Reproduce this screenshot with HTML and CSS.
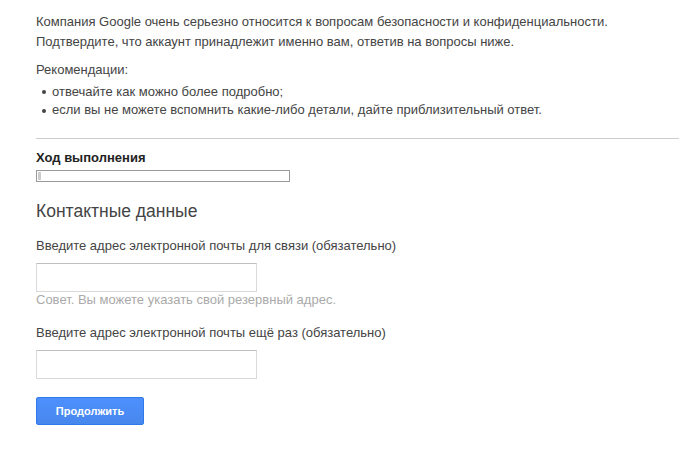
FILE: index.html
```html
<!DOCTYPE html>
<html lang="ru">
<head>
<meta charset="utf-8">
<link rel="stylesheet" href="styles.css">
</head>
<body>
<div class="page">
  <div class="intro">
    <p class="lead">Компания Google очень серьезно относится к вопросам безопасности и конфиденциальности.<br>Подтвердите, что аккаунт принадлежит именно вам, ответив на вопросы ниже.</p>
    <p class="rec-title">Рекомендации:</p>
    <ul class="rec-list">
      <li>отвечайте как можно более подробно;</li>
      <li>если вы не можете вспомнить какие-либо детали, дайте приблизительный ответ.</li>
    </ul>
  </div>
  <hr class="divider">
  <div class="form">
    <div class="progress-label">Ход выполнения</div>
    <div class="progress"><div class="progress-fill" style="width:1%"></div></div>
    <h2 class="section-title">Контактные данные</h2>
    <label class="field-label" for="email1">Введите адрес электронной почты для связи (обязательно)</label>
    <input class="text-input" id="email1" type="text">
    <div class="hint">Совет. Вы можете указать свой резервный адрес.</div>
    <label class="field-label second" for="email2">Введите адрес электронной почты ещё раз (обязательно)</label>
    <input class="text-input" id="email2" type="text">
    <div class="actions"><button class="btn-primary" type="button">Продолжить</button></div>
  </div>
</div>
</body>
</html>
```

FILE: styles.css
```css
html, body {
  margin: 0;
  padding: 0;
  background: #fff;
}
body {
  font-family: Arial, "Liberation Sans", sans-serif;
  font-size: 13px;
  color: #444;
}
.page {
  padding: 12px 0 0 36px;
}
.intro p {
  margin: 0;
}
.lead {
  line-height: 20px;
}
.rec-title {
  margin-top: 8px !important;
  line-height: 19px;
}
.rec-list {
  list-style: none;
  margin: 3px 0 0 0;
  padding: 0;
}
.rec-list li {
  position: relative;
  padding-left: 16px;
  line-height: 18px;
}
.rec-list li:first-child {
  line-height: 19px;
}
.rec-list li::before {
  content: "";
  position: absolute;
  left: 6px;
  top: 8px;
  width: 4px;
  height: 4px;
  border-radius: 50%;
  background: #444;
}
.divider {
  border: 0;
  border-top: 1px solid #ccc;
  margin: 19px 0 0 0;
  height: 0;
}
.form {
  padding-top: 11px;
}
.progress-label {
  font-weight: bold;
  color: #222;
  line-height: 16px;
}
.progress {
  margin-top: 4px;
  width: 250px;
  height: 8px;
  border: 1px solid #999;
  padding: 1px;
  box-sizing: content-box;
  display: flex;
}
.progress-fill {
  background: #ccc;
  min-width: 3px;
  height: 8px;
}
.section-title {
  margin: 18px 0 0 0;
  font-size: 17.5px;
  font-weight: normal;
  color: #444;
  line-height: 22px;
}
.field-label {
  display: block;
  margin-top: 15px;
  line-height: 18px;
}
.field-label.second {
  margin-top: 16px;
}
.text-input {
  display: block;
  margin-top: 8px;
  width: 221px;
  height: 29px;
  box-sizing: border-box;
  border: 1px solid #d9d9d9;
  border-top-color: #c0c0c0;
  padding: 0 8px;
  font: inherit;
  outline: none;
}
.hint {
  color: #aaa;
  margin-top: 0;
  line-height: 16px;
}
.actions {
  margin-top: 18px;
}
.btn-primary {
  width: 108px;
  height: 28px;
  border: 1px solid #3079ed;
  border-radius: 2px;
  background: linear-gradient(#4d90fe, #4787ed);
  color: #fff;
  font-family: Arial, "Liberation Sans", sans-serif;
  font-size: 11px;
  font-weight: bold;
  padding: 0;
}
```
